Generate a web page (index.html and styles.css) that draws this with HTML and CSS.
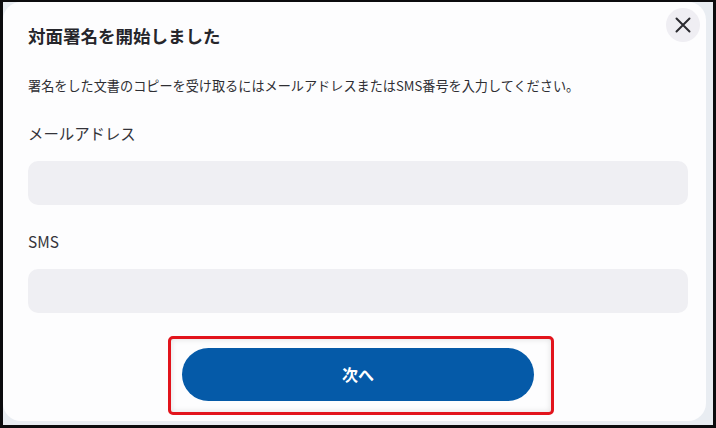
FILE: index.html
```html
<!DOCTYPE html>
<html lang="ja">
  <head>
    <meta charset="UTF-8" />
    <meta name="viewport" content="width=device-width, initial-scale=1.0" />
    <title>対面署名</title>
    <link rel="stylesheet" href="styles.css">
  </head>

  <body>
    <div class="frame">
      <div class="dialog">
        <button class="fechar" aria-label="閉じる">
          <svg width="18" height="18" viewBox="0 0 18 18">
            <path d="M2.5 2.5 L15.5 15.5 M15.5 2.5 L2.5 15.5" stroke="#2b2b30" stroke-width="2" stroke-linecap="round" />
          </svg>
        </button>

        <h2>対面署名を開始しました</h2>
        <p class="descricao">署名をした文書のコピーを受け取るにはメールアドレスまたはSMS番号を入力してください。</p>

        <label class="campo">
          <span>メールアドレス</span>
          <input type="email">
        </label>

        <label class="campo">
          <span>SMS</span>
          <input type="tel">
        </label>

        <div class="acoes">
          <div class="destaque">
            <button class="btn-proximo">次へ</button>
          </div>
        </div>
      </div>
    </div>
  </body>
</html>
```

FILE: styles.css
```css
* {
  margin: 0;
  padding: 0;
  box-sizing: border-box;
}

body {
  width: 716px;
  height: 428px;
  overflow: hidden;
  font-family: "Noto Sans CJK JP", "Noto Sans", sans-serif;
  color: #2a2a30;
}

.frame {
  width: 716px;
  height: 428px;
  border-style: solid;
  border-color: #0c0c0e;
  border-width: 2px 3px 3px 3px;
  background-color: #e9edf2;
}

.dialog {
  position: relative;
  width: 703px;
  height: 419px;
  background-color: #fdfdfe;
  border-radius: 18px;
  padding: 22px 18px 0 25px;
}

.fechar {
  all: unset;
  position: absolute;
  top: 6px;
  right: 6px;
  width: 34px;
  height: 34px;
  border-radius: 50%;
  background-color: #efeef3;
  display: flex;
  justify-content: center;
  align-items: center;
}

h2 {
  font-size: 17.5px;
  line-height: 24px;
  font-weight: bold;
  color: #26262b;
}

.descricao {
  margin-top: 28px;
  font-size: 13.15px;
  line-height: 20px;
  color: #2e2e33;
}

.campo {
  display: flex;
  flex-direction: column;
  row-gap: 17px;
  margin-top: 26px;
}

.campo + .campo {
  margin-top: 25px;
}

.campo span {
  font-size: 15.4px;
  line-height: 22px;
  color: #34343a;
}

.campo input {
  all: unset;
  height: 44px;
  border-radius: 10px;
  background-color: #efeff3;
}

.acoes {
  display: flex;
  justify-content: center;
  margin-top: 23px;
  padding-left: 6px;
}

.destaque {
  padding: 9px 17px 11px 11px;
  border: 3px solid #e2141c;
  border-radius: 5px;
  box-shadow: inset 0 0 6px rgba(0, 0, 0, 0.12);
}

.btn-proximo {
  all: unset;
  display: block;
  width: 352px;
  height: 53px;
  border-radius: 27px;
  background-color: #055aa8;
  color: #ffffff;
  font-size: 16px;
  font-weight: bold;
  text-align: center;
  line-height: 53px;
}
```
